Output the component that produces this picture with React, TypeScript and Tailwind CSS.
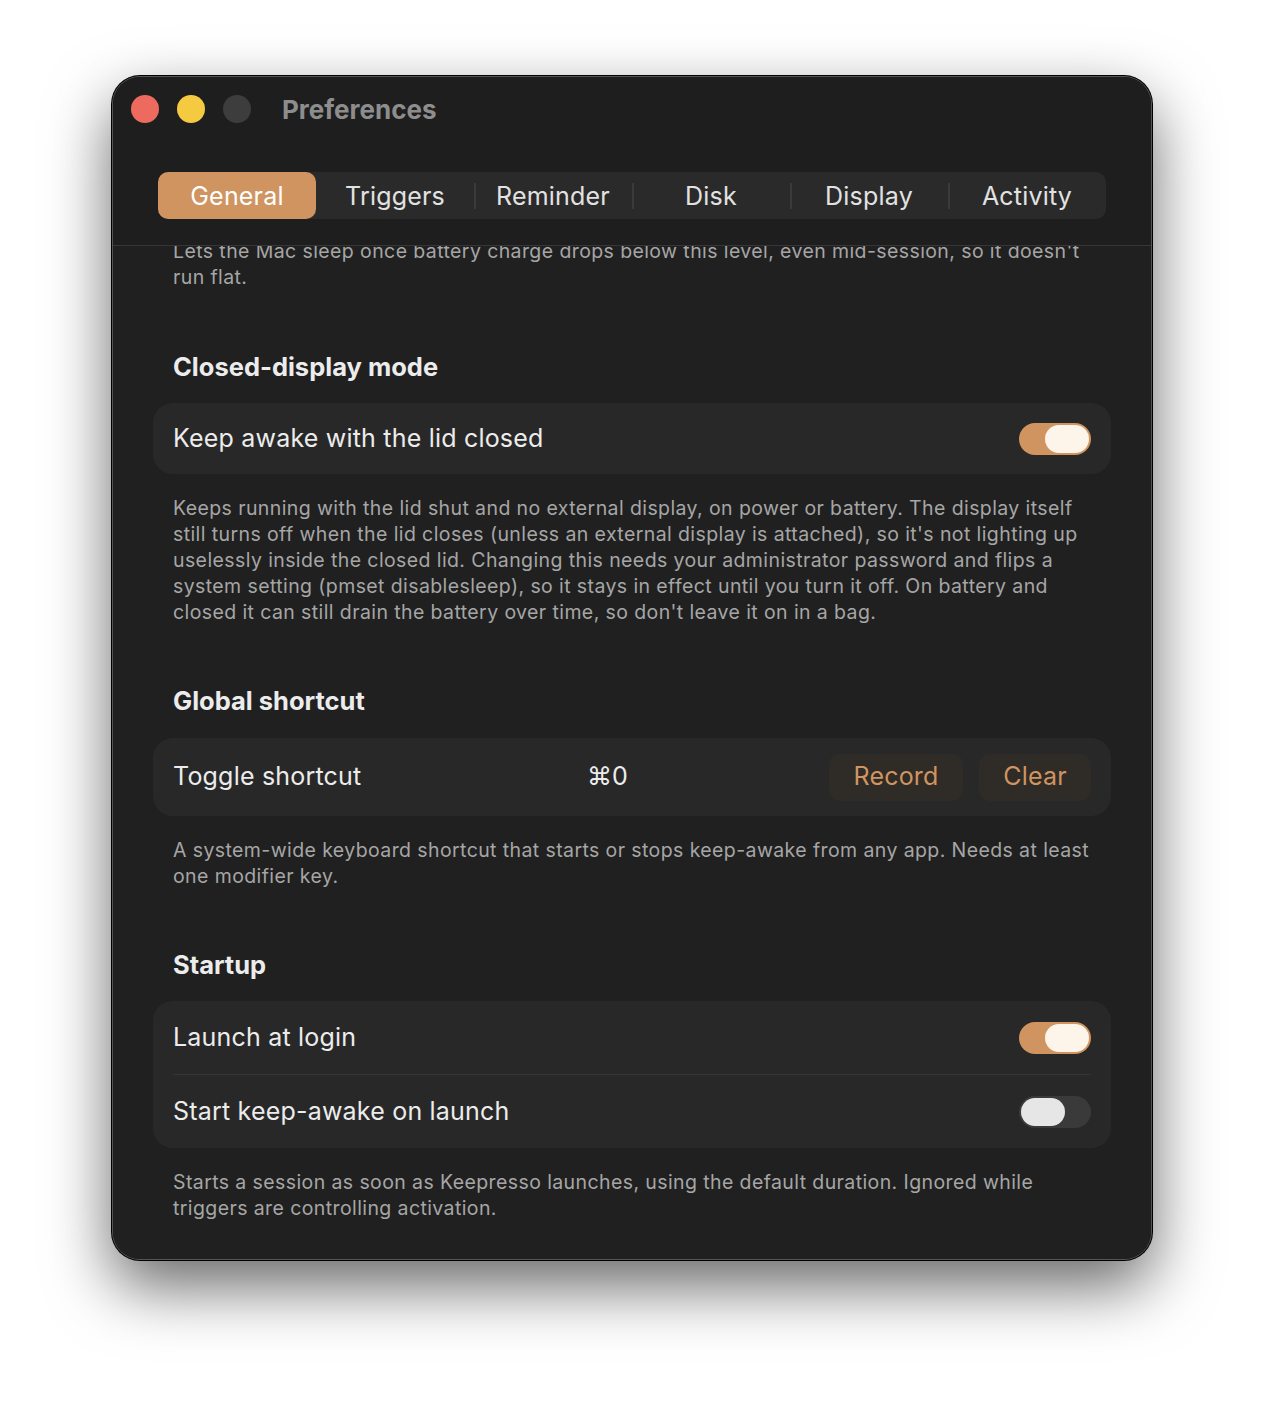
import React from "react";

const font = { fontFamily: "Inter, 'Noto Sans', sans-serif" };

function Toggle({ on }: { on: boolean }) {
  return (
    <div
      className={
        "flex h-[32px] w-[72px] items-center rounded-full p-[2px] " +
        (on ? "justify-end bg-[#cf945f]" : "justify-start bg-[#3a3a3a]")
      }
    >
      <div
        className={
          "h-[28px] w-[44px] rounded-full " + (on ? "bg-[#fdf4ea]" : "bg-[#e6e6e6]")
        }
      />
    </div>
  );
}

const tabs = ["General", "Triggers", "Reminder", "Disk", "Display", "Activity"];

export default function App() {
  return (
    <div className="min-h-[1408px] w-[1264px] bg-white pl-[112px] pt-[76px]" style={font}>
      <div className="flex h-[1184px] w-[1040px] flex-col overflow-hidden rounded-[28px] border border-[#555] bg-[#1f1f1f] shadow-[0_26px_64px_rgba(0,0,0,0.6),0_0_0_1px_#000]">
        {/* Title bar */}
        <div className="flex h-[168px] flex-col bg-[#1e1e1e]">
          <div className="flex h-[64px] items-center pl-[18px]">
            <div className="h-[28px] w-[28px] rounded-full bg-[#ed6a5e]" />
            <div className="ml-[18px] h-[28px] w-[28px] rounded-full bg-[#f5c940]" />
            <div className="ml-[18px] h-[28px] w-[28px] rounded-full bg-[#3d3d3d]" />
            <div className="ml-[31px] text-[26px] font-bold text-[#8d8d8d]">Preferences</div>
          </div>
          <div className="mt-[31px] flex justify-center">
            <div className="flex h-[47px] w-[948px] items-center rounded-[10px] bg-[#2a2a2a]">
              {tabs.map((t, i) => (
                <div key={t} className="relative flex h-full w-[158px] items-center justify-center">
                  {i > 1 && (
                    <div className="absolute left-0 top-[11px] h-[26px] w-[2px] bg-[#3a3a3a]" />
                  )}
                  <div
                    className={
                      "flex h-full w-full items-center justify-center rounded-[10px] pt-[2px] text-[25px] tracking-[0.2px] " +
                      (i === 0 ? "bg-[#cf945f] text-white" : "text-[#e2e2e2]")
                    }
                  >
                    {t}
                  </div>
                </div>
              ))}
            </div>
          </div>
        </div>
        <div className="h-[1px] bg-[#363636]" />
        {/* Content */}
        <div className="flex-1 overflow-hidden bg-[#202020] px-[40px]">
          <div className="mt-[-8px] flex flex-col">
            <p className="px-[20px] text-[19.5px] leading-[26px] tracking-[0.4px] text-[#a6a6a6]">
              Lets the Mac sleep once battery charge drops below this level, even mid-session, so it doesn't run flat.
            </p>

            <h2 className="mt-[62px] px-[20px] text-[25.5px] font-bold leading-[30px] text-[#ececec]">
              Closed-display mode
            </h2>
            <div className="mt-[21px] flex h-[71px] items-center justify-between rounded-[20px] bg-[#282828] px-[20px]">
              <span className="text-[25px] tracking-[0.2px] text-[#ececec]">Keep awake with the lid closed</span>
              <Toggle on />
            </div>
            <p className="mt-[21px] px-[20px] text-[19.5px] leading-[26px] tracking-[0.4px] text-[#a6a6a6]">
              Keeps running with the lid shut and no external display, on power or battery. The display itself still turns off when the lid closes (unless an external display is attached), so it's not lighting up uselessly inside the closed lid. Changing this needs your administrator password and flips a system setting (pmset disablesleep), so it stays in effect until you turn it off. On battery and closed it can still drain the battery over time, so don't leave it on in a bag.
            </p>

            <h2 className="mt-[61px] px-[20px] text-[25.5px] font-bold leading-[30px] text-[#ececec]">
              Global shortcut
            </h2>
            <div className="mt-[22px] flex h-[78px] items-center rounded-[20px] bg-[#282828] px-[20px]">
              <span className="w-[414px] text-[25px] tracking-[0.2px] text-[#ececec]">Toggle shortcut</span>
              <span className="text-[25px] text-[#ececec]">⌘0</span>
              <div className="ml-auto flex gap-[16px]">
                <div className="flex h-[47px] w-[134px] items-center justify-center rounded-[10px] bg-[#2f2b27] text-[25px] tracking-[0.2px] text-[#cf945f]">
                  Record
                </div>
                <div className="flex h-[47px] w-[112px] items-center justify-center rounded-[10px] bg-[#2f2b27] text-[25px] tracking-[0.2px] text-[#cf945f]">
                  Clear
                </div>
              </div>
            </div>
            <p className="mt-[21px] px-[20px] text-[19.5px] leading-[26px] tracking-[0.4px] text-[#a6a6a6]">
              A system-wide keyboard shortcut that starts or stops keep-awake from any app. Needs at least one modifier key.
            </p>

            <h2 className="mt-[61px] px-[20px] text-[25.5px] font-bold leading-[30px] text-[#ececec]">
              Startup
            </h2>
            <div className="mt-[21px] flex flex-col rounded-[20px] bg-[#282828] px-[20px]">
              <div className="flex h-[73px] items-center justify-between">
                <span className="text-[25px] tracking-[0.2px] text-[#ececec]">Launch at login</span>
                <Toggle on />
              </div>
              <div className="h-[1px] bg-[#363636]" />
              <div className="flex h-[73px] items-center justify-between">
                <span className="text-[25px] tracking-[0.2px] text-[#ececec]">Start keep-awake on launch</span>
                <Toggle on={false} />
              </div>
            </div>
            <p className="mt-[21px] px-[20px] text-[19.5px] leading-[26px] tracking-[0.4px] text-[#a6a6a6]">
              Starts a session as soon as Keepresso launches, using the default duration. Ignored while triggers are controlling activation.
            </p>
          </div>
        </div>
      </div>
    </div>
  );
}
